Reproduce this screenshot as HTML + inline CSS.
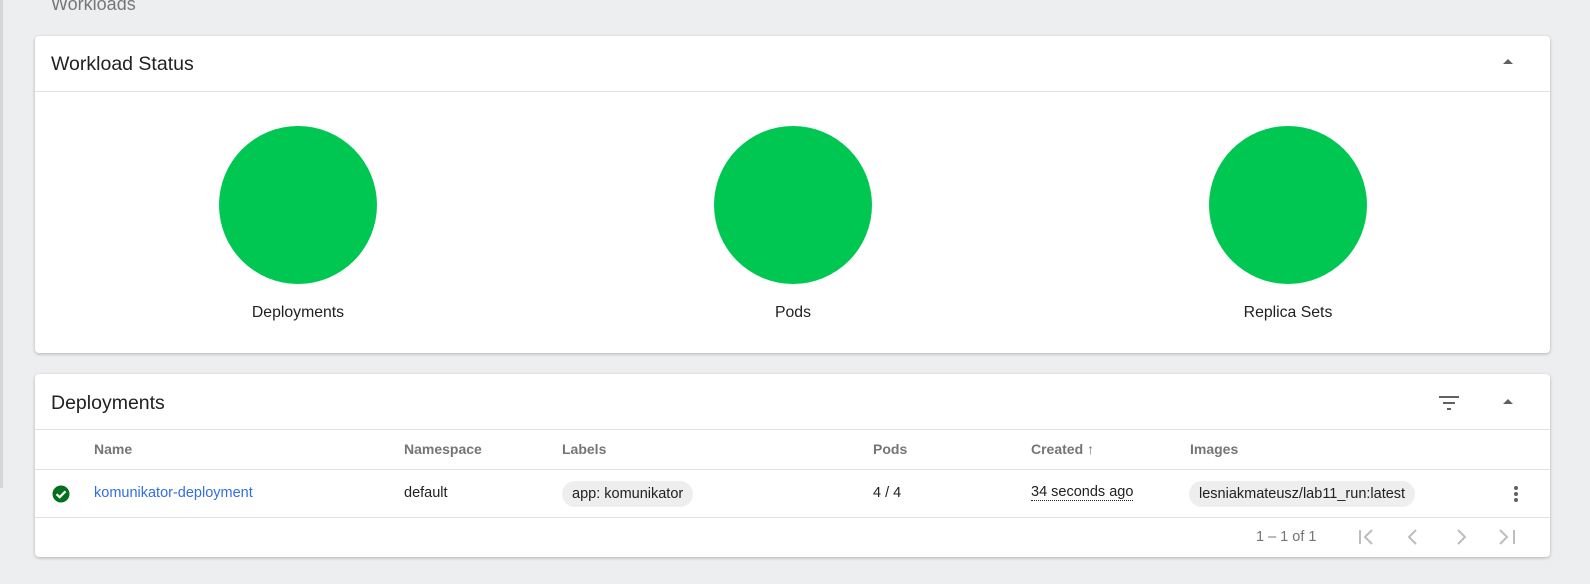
<!DOCTYPE html>
<html><head><meta charset="utf-8"><style>
*{box-sizing:border-box;margin:0;padding:0}
body{width:1590px;height:584px;background:#edeef0;font-family:"Liberation Sans",sans-serif;position:relative;overflow:hidden;color:#212121}
.a{position:absolute}
.card{position:absolute;left:35px;width:1515px;background:#fff;border-radius:4px;box-shadow:0 1px 3px rgba(0,0,0,.25)}
.h{position:absolute;left:16px;font-size:19.5px;color:#212121}
.line{position:absolute;left:0;right:0;height:1px;background:#e0e0e0}
.circ{position:absolute;width:158px;height:158px;border-radius:50%;background:#00c752;top:90px}
.lbl{position:absolute;top:268px;font-size:15.8px;width:300px;text-align:center}
.th{position:absolute;top:67px;font-size:14px;color:#757575;font-weight:bold}
.td{position:absolute;top:111px;font-size:14.5px}
.chip{position:absolute;top:107px;height:26px;border-radius:13px;background:#eeeeee;padding:0 10px;line-height:26px;font-size:14.5px}
</style></head><body>
<div class="a" style="left:0;top:0;width:3px;height:488px;background:#d5d6d8"></div>
<div class="a" style="left:51px;top:-6px;font-size:18px;color:#777">Workloads</div>

<div class="card" style="top:36px;height:317px">
<div class="h" style="top:17px">Workload Status</div>
<svg class="a" style="left:1467px;top:22px" width="12" height="8"><path d="M1 6L6 1L11 6Z" fill="#616161"/></svg>
<div class="line" style="top:55px"></div>
<div class="circ" style="left:184px"></div>
<div class="circ" style="left:679px"></div>
<div class="circ" style="left:1174px"></div>
<div class="lbl" style="left:113px">Deployments</div>
<div class="lbl" style="left:608px">Pods</div>
<div class="lbl" style="left:1103px">Replica Sets</div>
</div>

<div class="card" style="top:374px;height:183px">
<div class="h" style="top:18px">Deployments</div>
<svg class="a" style="left:1404px;top:21px" width="20" height="16"><rect x="0" y="1" width="20" height="2" fill="#616161"/><rect x="4" y="7" width="12" height="2" fill="#616161"/><rect x="8" y="13" width="4" height="2" fill="#616161"/></svg>
<svg class="a" style="left:1467px;top:24px" width="12" height="8"><path d="M1 6L6 1L11 6Z" fill="#616161"/></svg>
<div class="line" style="top:55px"></div>
<div class="th" style="left:59px">Name</div>
<div class="th" style="left:369px">Namespace</div>
<div class="th" style="left:527px">Labels</div>
<div class="th" style="left:838px">Pods</div>
<div class="th" style="left:996px">Created <span style="font-size:14px">&#8593;</span></div>
<div class="th" style="left:1155px">Images</div>
<div class="line" style="top:95px"></div>
<svg class="a" style="left:17px;top:111px" width="18" height="18"><circle cx="9" cy="9" r="8.5" fill="#00701e"/><path d="M4.5 9.2L7.7 12.2L13.5 6.3" stroke="#fff" stroke-width="2.2" fill="none"/></svg>
<div class="td" style="left:59px;color:#326de6">komunikator-deployment</div>
<div class="td" style="left:369px">default</div>
<div class="chip" style="left:527px">app: komunikator</div>
<div class="td" style="left:838px">4 / 4</div>
<div class="td" style="left:996px;border-bottom:1px dotted #212121;line-height:15px">34 seconds ago</div>
<div class="chip" style="left:1154px">lesniakmateusz/lab11_run:latest</div>
<svg class="a" style="left:1478px;top:111px" width="6" height="18"><circle cx="3" cy="3" r="2" fill="#616161"/><circle cx="3" cy="9" r="2" fill="#616161"/><circle cx="3" cy="15" r="2" fill="#616161"/></svg>
<div class="line" style="top:143px"></div>
<div class="a" style="left:1221px;top:155px;font-size:14.5px;color:#757575">1 – 1 of 1</div>
<svg class="a" style="left:1322px;top:154px" width="20" height="18"><path d="M3 2V16M15 2L8 9L15 16" stroke="#bdbdbd" stroke-width="2" fill="none"/></svg>
<svg class="a" style="left:1370px;top:154px" width="16" height="18"><path d="M11 2L4 9L11 16" stroke="#bdbdbd" stroke-width="2" fill="none"/></svg>
<svg class="a" style="left:1418px;top:154px" width="16" height="18"><path d="M5 2L12 9L5 16" stroke="#bdbdbd" stroke-width="2" fill="none"/></svg>
<svg class="a" style="left:1462px;top:154px" width="20" height="18"><path d="M3 2L10 9L3 16M17 2V16" stroke="#bdbdbd" stroke-width="2" fill="none"/></svg>
</div>
</body></html>
